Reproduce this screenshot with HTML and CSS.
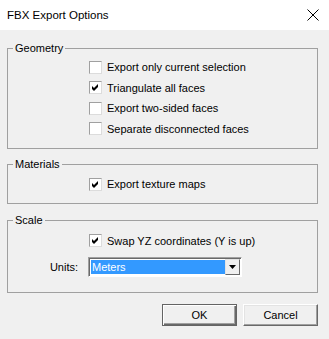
FILE: index.html
```html
<!DOCTYPE html>
<html lang="en">
<head>
  <meta charset="UTF-8">
  <title>FBX Export Options</title>
  <link rel="stylesheet" href="styles.css">
</head>
<body>
  <div class="titlebar">
    <span class="title">FBX Export Options</span>
    <svg class="close" width="12" height="12" viewBox="0 0 12 12">
      <path d="M0.5 0.5 L11.5 11.5 M11.5 0.5 L0.5 11.5" stroke="#000" stroke-width="1" fill="none"/>
    </svg>
  </div>

  <div class="content">
    <!-- Geometry -->
    <fieldset class="group geometry">
      <legend>Geometry</legend>
      <label class="option"><span class="check"></span>Export only current selection</label>
      <label class="option"><span class="check on"><svg width="7" height="7" viewBox="0 0 7 7"><polygon points="0,2 2,4 6,0 6,3 2,7 0,5" fill="#000"/></svg></span>Triangulate all faces</label>
      <label class="option"><span class="check"></span>Export two-sided faces</label>
      <label class="option"><span class="check"></span>Separate disconnected faces</label>
    </fieldset>

    <!-- Materials -->
    <fieldset class="group materials">
      <legend>Materials</legend>
      <label class="option"><span class="check on"><svg width="7" height="7" viewBox="0 0 7 7"><polygon points="0,2 2,4 6,0 6,3 2,7 0,5" fill="#000"/></svg></span>Export texture maps</label>
    </fieldset>

    <!-- Scale -->
    <fieldset class="group scale">
      <legend>Scale</legend>
      <label class="option"><span class="check on"><svg width="7" height="7" viewBox="0 0 7 7"><polygon points="0,2 2,4 6,0 6,3 2,7 0,5" fill="#000"/></svg></span>Swap YZ coordinates (Y is up)</label>
      <div class="units">
        <span class="units-label">Units:</span>
        <div class="combo">
          <span class="combo-value"><span class="combo-text">Meters</span></span>
          <span class="combo-btn"><svg width="7" height="4" viewBox="0 0 7 4"><polygon points="0,0 7,0 3.5,4" fill="#000"/></svg></span>
        </div>
      </div>
    </fieldset>

    <div class="buttons">
      <button class="btn default">OK</button>
      <button class="btn">Cancel</button>
    </div>
  </div>
</body>
</html>
```

FILE: styles.css
```css
html { background: #f0f0f0; }
body { margin: 0; font-family: "Liberation Sans", Arial, sans-serif; font-size: 11px; color: #000; }

.titlebar { height: 30px; background: #fff; display: flex; align-items: center; justify-content: space-between; padding: 0 10px 0 7px; }
.title { font-size: 11.5px; }
.close { display: block; }

.content { padding-top: 12px; }

.group { margin: 0 11px 0 7px; border: 1px solid #a0a0a0; padding: 2px 0 9px 0; min-width: 0; }
.group legend { margin-left: 5px; padding: 0 2px; line-height: 13px; }
.materials { margin-top: 9px; padding-top: 3px; padding-bottom: 8px; }
.scale { margin-top: 10px; padding-top: 4px; padding-bottom: 15px; }

.option { display: flex; align-items: center; height: 20.5px; padding-left: 81px; }
.check { width: 11px; height: 11px; border: 1px solid; border-color: #a0a0a0 #dcdcdc #dcdcdc #a0a0a0; background: #fff; margin-right: 5px; display: flex; align-items: center; justify-content: center; }
.check svg { display: block; }

.units { display: flex; align-items: center; margin-top: 6px; }
.units-label { width: 70px; text-align: right; margin-right: 10px; }
.combo { width: 150px; height: 16px; display: flex; border: 1px solid; border-color: #a0a0a0 #fff #fff #a0a0a0; box-shadow: inset 1px 1px #696969; padding: 1px; background: #fff; }
.combo-value { flex: 1; display: flex; padding: 1px 0 1px 1px; }
.combo-text { flex: 1; background: #3399ff; color: #fff; line-height: 14px; padding-left: 1px; }
.combo-btn { width: 15px; display: flex; align-items: center; justify-content: center; background: #f0f0f0; border: 1px solid; border-color: #e3e3e3 #696969 #696969 #e3e3e3; box-sizing: border-box; }
.combo-btn svg { display: block; }

.buttons { display: flex; justify-content: flex-end; gap: 6px; padding: 11px 11px 0 0; }
.btn { width: 75px; height: 22px; font-family: inherit; font-size: 11px; background: #f0f0f0; border: 1px solid; border-color: #fff #696969 #696969 #fff; box-shadow: inset -1px -1px #a0a0a0, inset 1px 1px #e3e3e3; padding: 0; color: #000; }
.btn.default { border-color: #646464; box-shadow: inset 1px 1px #fff, inset -1px -1px #696969, inset -2px -2px #a0a0a0; }
```
